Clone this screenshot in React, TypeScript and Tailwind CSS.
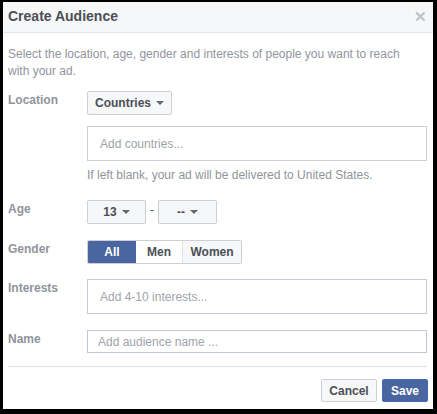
import React from 'react';

const font = { fontFamily: '"Liberation Sans", Arial, Helvetica, sans-serif' };

function Caret() {
  return (
    <span className="ml-[5px] inline-block h-0 w-0 border-x-[4px] border-t-[4px] border-x-transparent border-t-[#606770] align-middle" />
  );
}

function Row({ label, children, className = '' }: { label: string; children: React.ReactNode; className?: string }) {
  return (
    <div className={`flex ${className}`}>
      <div className="w-[79px] shrink-0 pt-[1px] text-[12px] font-bold leading-[16px] text-[#90949c]">{label}</div>
      <div className="min-w-0 flex-1">{children}</div>
    </div>
  );
}

function Dropdown({ text, width }: { text: string; width: string }) {
  return (
    <button
      className={`flex h-[24px] ${width} items-center justify-center rounded-[2px] border border-[#ccd0d5] bg-[#f6f7f9] text-[12px] font-bold text-[#4b4f56]`}
    >
      {text}
      <Caret />
    </button>
  );
}

export default function App() {
  return (
    <div className="h-[414px] w-[437px] bg-black pb-[5px] pl-[3px] pr-[4px] pt-[2px]" style={font}>
      <div className="flex h-full flex-col bg-white">
        <div className="flex h-[31px] items-center justify-between border-b border-[#e5e5e5] bg-[#f6f7f9] pl-[5px] pr-[6px]">
          <h1 className="pb-[2px] text-[14px] font-bold text-[#4b4f56]">Create Audience</h1>
          <span className="pb-[2px] text-[15px] font-bold leading-none text-[#bec2c9]">✕</span>
        </div>

        <div className="pl-[5px] pr-[6px] pt-[13px]">
          <p className="pr-[10px] text-[12px] leading-[17px] text-[#90949c]">
            Select the location, age, gender and interests of people you want to reach with your ad.
          </p>

          <Row label="Location" className="mt-[11px]">
            <Dropdown text="Countries" width="w-[85px]" />
            <div className="mt-[11px] flex h-[35px] items-center border border-[#ccd0d5] pl-[12px] text-[12px] text-[#a0a3a9]">
              Add countries...
            </div>
            <p className="mt-[6px] text-[12px] leading-[16px] text-[#90949c]">
              If left blank, your ad will be delivered to United States.
            </p>
          </Row>

          <Row label="Age" className="mt-[17px]">
            <div className="flex items-center">
              <Dropdown text="13" width="w-[59px]" />
              <span className="mx-[4px] pb-[4px] text-[12px] leading-[16px] text-[#4b4f56]">-</span>
              <Dropdown text="--" width="w-[59px]" />
            </div>
          </Row>

          <Row label="Gender" className="mt-[16px]">
            <div className="flex h-[24px] w-[155px] overflow-hidden rounded-[2px] border border-[#ccd0d5] text-[12px] font-bold">
              <div className="flex w-[48px] items-center justify-center bg-[#4a66a0] text-white">All</div>
              <div className="flex w-[46px] items-center justify-center bg-white text-[#4b4f56]">Men</div>
              <div className="flex flex-1 items-center justify-center border-l border-[#dddfe2] bg-[#f6f7f9] text-[#4b4f56]">
                Women
              </div>
            </div>
          </Row>

          <Row label="Interests" className="mt-[15px]">
            <div className="flex h-[35px] items-center border border-[#c4cad4] pl-[12px] text-[12px] text-[#a0a3a9]">
              Add 4-10 interests...
            </div>
          </Row>

          <Row label="Name" className="mt-[16px]">
            <div className="flex h-[23px] items-center border border-[#bdc7d8] pl-[10px] text-[12px] text-[#a0a3a9]">
              Add audience name ...
            </div>
          </Row>

          <div className="mt-[13px] h-px bg-[#dddfe2]" />

          <div className="mt-[12px] flex justify-end gap-[5px]">
            <button className="h-[23px] w-[56px] rounded-[2px] border border-[#ccd0d5] bg-[#f6f7f9] text-[12px] font-bold text-[#4b4f56]">
              Cancel
            </button>
            <button className="mr-[-1px] h-[23px] w-[46px] rounded-[2px] border border-[#4267b2] bg-[#4a66a0] text-[12px] font-bold text-white">
              Save
            </button>
          </div>
        </div>
      </div>
    </div>
  );
}
